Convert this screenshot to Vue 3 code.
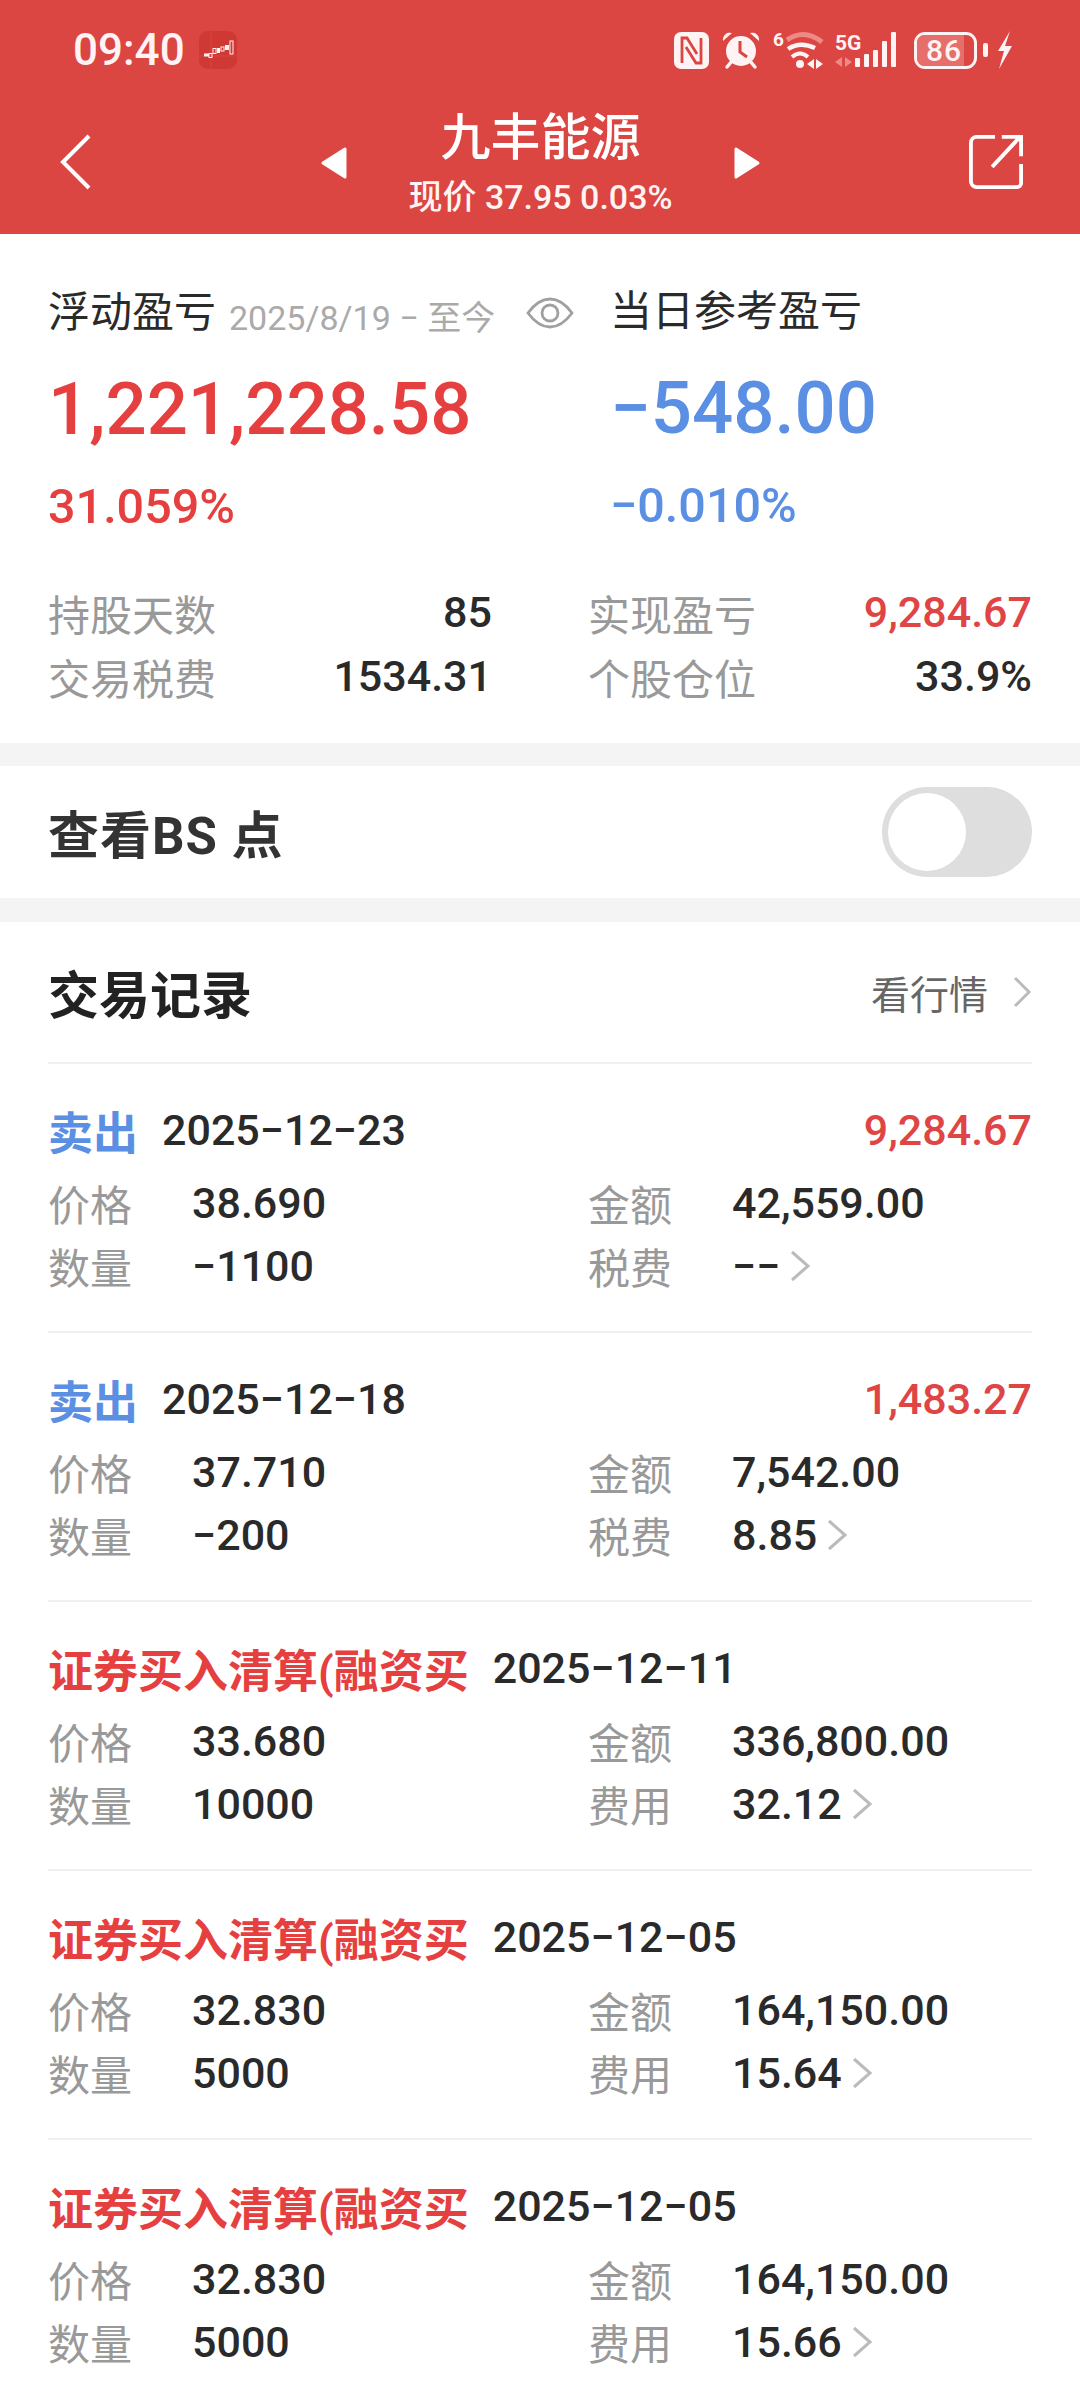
<script setup>
const stats = [
  [{ l: '持股天数', v: '85' }, { l: '实现盈亏', v: '9,284.67', red: true }],
  [{ l: '交易税费', v: '1534.31' }, { l: '个股仓位', v: '33.9%' }],
]
const records = [
  { type: '卖出', sell: true, date: '2025−12−23', profit: '9,284.67', price: '38.690', amount: '42,559.00', qty: '−1100', feeLabel: '税费', fee: '−−' },
  { type: '卖出', sell: true, date: '2025−12−18', profit: '1,483.27', price: '37.710', amount: '7,542.00', qty: '−200', feeLabel: '税费', fee: '8.85' },
  { type: '证券买入清算(融资买', date: '2025−12−11', price: '33.680', amount: '336,800.00', qty: '10000', feeLabel: '费用', fee: '32.12' },
  { type: '证券买入清算(融资买', date: '2025−12−05', price: '32.830', amount: '164,150.00', qty: '5000', feeLabel: '费用', fee: '15.64' },
  { type: '证券买入清算(融资买', date: '2025−12−05', price: '32.830', amount: '164,150.00', qty: '5000', feeLabel: '费用', fee: '15.66' },
]
</script>

<template>
  <div class="page">
    <header class="head">
      <div class="status">
        <div class="status-left">
          <span class="time">09:40</span>
          <svg width="38" height="38" viewBox="0 0 38 38">
            <rect width="38" height="38" rx="9" fill="#cf3833" />
            <path d="M12 0v38M0 25h38" stroke="#d9443f" stroke-width="1" />
            <g fill="#fff3f3">
              <rect x="5" y="22.5" width="5" height="3" />
              <rect x="18" y="17" width="3" height="5" />
              <rect x="26" y="14" width="4" height="5" />
            </g>
            <g fill="none" stroke="#fff3f3" stroke-width="1">
              <rect x="10" y="22.5" width="3" height="4" />
              <rect x="14" y="17.5" width="3" height="5" />
              <rect x="22" y="16" width="3" height="4" />
              <rect x="31" y="10" width="3" height="13" />
            </g>
          </svg>
        </div>
        <div class="status-right">
          <svg class="i-nfc" width="35" height="37" viewBox="0 0 35 37">
            <rect width="35" height="37" rx="7" fill="#fff3f3" />
            <path d="M8 31V6h5l10 16M27 6v25h-5L12 15" fill="none" stroke="#db4542" stroke-width="2.8" />
          </svg>
          <svg class="i-alarm" width="38" height="38" viewBox="0 0 38 38">
            <circle cx="19" cy="20" r="15" fill="#fff3f3" />
            <path d="M1 10a7 7 0 0 1 9-8zM37 10a7 7 0 0 0-9-8z" fill="#fff3f3" />
            <path d="M5 36l5-6M33 36l-5-6" stroke="#fff3f3" stroke-width="3.5" stroke-linecap="round" />
            <path d="M18 10v11l7 5" fill="none" stroke="#db4542" stroke-width="3" />
          </svg>
          <svg class="i-wifi" width="51" height="40" viewBox="0 0 51 40">
            <text x="0" y="16" class="tiny">6</text>
            <path d="M14 10Q31 -2 49 12" fill="none" stroke="#ec8a87" stroke-width="5" />
            <path d="M15 19Q27 11 42 18" fill="none" stroke="#fff3f3" stroke-width="4.5" />
            <path d="M19 27Q27 20 35 27" fill="none" stroke="#fff3f3" stroke-width="4" />
            <circle cx="27" cy="34" r="4" fill="#fff3f3" />
            <path d="M41 29v10l-7-5zM43 29v10l7-5z" fill="#fff3f3" />
          </svg>
          <svg class="i-signal" width="64" height="40" viewBox="0 0 64 40">
            <text x="1" y="20" class="tiny2">5G</text>
            <path d="M8 27v10l-7-5zM11 27v10l7-5z" fill="#ec8a87" />
            <rect x="21" y="28" width="5" height="9" rx="1" fill="#fff3f3" />
            <rect x="30" y="24" width="5" height="13" rx="1" fill="#fff3f3" />
            <rect x="39" y="20" width="5" height="17" rx="1" fill="#fff3f3" />
            <rect x="48" y="11" width="5" height="26" rx="1" fill="#fff3f3" />
            <rect x="57" y="2" width="5" height="35" rx="1" fill="#fff3f3" />
          </svg>
          <div class="batt">
            <div class="batt-body"><div class="batt-fill"></div><span>86</span></div>
            <i class="batt-tip"></i>
          </div>
          <svg class="i-bolt" width="15" height="38" viewBox="0 0 15 38"><path d="M13 0L1 20h6L2 38l13-23H8z" fill="#fff3f3" /></svg>
        </div>
      </div>
      <div class="nav">
        <svg class="back" width="34" height="56" viewBox="0 0 34 56"><path d="M30 2L4 28l26 26" fill="none" stroke="#fff" stroke-width="4" /></svg>
        <div class="nav-mid">
          <svg width="26" height="32" viewBox="0 0 26 32"><path d="M24 2v28L2 16z" fill="#fff" stroke="#fff" stroke-width="3" stroke-linejoin="round" /></svg>
          <div class="titles">
            <div class="title">九丰能源</div>
            <div class="sub">现价 37.95 0.03%</div>
          </div>
          <svg width="26" height="32" viewBox="0 0 26 32"><path d="M2 2v28l22-14z" fill="#fff" stroke="#fff" stroke-width="3" stroke-linejoin="round" /></svg>
        </div>
        <svg class="share" width="54" height="54" viewBox="0 0 56 56">
          <path d="M27 2H8a6 6 0 0 0-6 6v40a6 6 0 0 0 6 6h42a4 4 0 0 0 4-4V30" fill="none" stroke="#fff" stroke-width="4" />
          <path d="M24 33L52 3M34 2h20v20" fill="none" stroke="#fff" stroke-width="4" />
        </svg>
      </div>
    </header>

    <section class="summary">
      <div class="pl">
        <div class="pl-left">
          <div class="pl-label">
            <span class="lbl">浮动盈亏</span>
            <span class="range">2025/8/19 − 至今</span>
            <svg class="eye" width="48" height="32" viewBox="0 0 48 32">
              <path d="M2 16C10 5 18 2 24 2s14 3 22 14c-8 11-16 14-22 14S10 27 2 16z" fill="none" stroke="#a0a0a0" stroke-width="2.8" />
              <circle cx="24" cy="16" r="8" fill="none" stroke="#a0a0a0" stroke-width="2.8" />
            </svg>
          </div>
          <div class="big red">1,221,228.58</div>
          <div class="pct red">31.059%</div>
        </div>
        <div class="pl-right">
          <div class="lbl">当日参考盈亏</div>
          <div class="big blue">−548.00</div>
          <div class="pct blue">−0.010%</div>
        </div>
      </div>
      <div class="stats">
        <div v-for="(row, i) in stats" :key="i" class="stat-row">
          <div v-for="c in row" :key="c.l" class="stat">
            <span class="grey">{{ c.l }}</span>
            <span class="val" :class="{ red: c.red }">{{ c.v }}</span>
          </div>
        </div>
      </div>
    </section>

    <section class="toggle-row">
      <div class="toggle-title">查看BS 点</div>
      <div class="toggle"><div class="knob"></div></div>
    </section>

    <section class="records">
      <div class="rec-head">
        <div class="rec-title">交易记录</div>
        <div class="rec-link">
          <span>看行情</span>
          <svg width="20" height="32" viewBox="0 0 20 32"><path d="M3 2l14 14L3 30" fill="none" stroke="#bbb" stroke-width="3" /></svg>
        </div>
      </div>
      <div v-for="(r, i) in records" :key="i" class="rec">
        <div class="rec-top">
          <div class="rec-type">
            <b :class="r.sell ? 'blue' : 'red'">{{ r.type }}</b>
            <span class="val">{{ r.date }}</span>
          </div>
          <span v-if="r.profit" class="val red">{{ r.profit }}</span>
        </div>
        <div class="rec-grid">
          <div class="cell"><span class="grey">价格</span><span class="val">{{ r.price }}</span></div>
          <div class="cell"><span class="grey">金额</span><span class="val">{{ r.amount }}</span></div>
          <div class="cell"><span class="grey">数量</span><span class="val">{{ r.qty }}</span></div>
          <div class="cell">
            <span class="grey">{{ r.feeLabel }}</span><span class="val">{{ r.fee }}</span>
            <svg class="chev" width="22" height="32" viewBox="0 0 22 32"><path d="M3 2l16 14L3 30" fill="none" stroke="#bbb" stroke-width="3" /></svg>
          </div>
        </div>
      </div>
    </section>
  </div>
</template>

<style scoped>
.page {
  width: 1080px;
  height: 2400px;
  overflow: hidden;
  background: #f4f4f4;
  font-family: Roboto, "Noto Sans CJK SC", sans-serif;
  color: #222;
  font-size: 40px;
}
svg { overflow: visible; }
.head { height: 234px; background: #db4542; color: #fff; }
.status { height: 100px; display: flex; justify-content: space-between; align-items: center; padding: 0 68px 0 73px; }
.status-left { display: flex; align-items: center; gap: 14px; }
.time { font-size: 44px; font-weight: 500; color: #fff3f3; }
.status-right { display: flex; align-items: center; }
.i-nfc { margin-right: 13px; }
.i-alarm { margin-right: 13px; }
.i-wifi { margin-right: 10px; }
.i-signal { margin-right: 16px; }
.i-bolt { margin-left: 9px; }
.tiny { font: 700 19px Roboto, sans-serif; fill: #fff3f3; }
.tiny2 { font: 700 21px Roboto, sans-serif; fill: #fff3f3; }
.batt { display: flex; align-items: center; gap: 6px; }
.batt-body { position: relative; width: 63px; height: 37px; border: 3px solid #fff3f3; border-radius: 11px; box-sizing: border-box; display: flex; align-items: center; justify-content: center; font-size: 30px; font-weight: 500; color: #fff3f3; letter-spacing: 1px; }
.batt-body span { position: relative; margin-right: 3px; line-height: 31px; }
.batt-fill { position: absolute; inset: 0 10px 0 0; background: #e66f6c; border-radius: 8px 0 0 8px; }
.batt-tip { width: 5px; height: 14px; background: #fff3f3; border-radius: 2px; }
.nav { height: 133px; display: flex; align-items: center; justify-content: space-between; padding: 0 57px 0 59px; position: relative; }
.nav-mid { position: absolute; left: 321px; width: 439px; top: 0; height: 133px; display: flex; justify-content: space-between; align-items: center; }
.nav-mid > svg { margin-top: -8px; }
.back, .share { margin-top: -9px; }
.titles { text-align: center; height: 133px; box-sizing: border-box; padding-top: 7px; }
.title { font-size: 50px; line-height: 62px; font-weight: 500; }
.sub { font-size: 34px; line-height: 56px; font-weight: 500; color: #fff3f3; white-space: nowrap; }

.summary { background: #fff; height: 509px; padding: 49px 48px 0; box-sizing: border-box; }
.pl { display: flex; height: 297px; }
.pl-left { width: 562px; flex: none; }
.pl-right { margin-top: -1px; }
.pl-label { display: flex; align-items: center; height: 60px; white-space: nowrap; }
.lbl { font-size: 42px; line-height: 60px; color: #2a2a2a; }
.range { font-size: 34px; color: #aaa; margin: 4px 0 0 13px; }
.eye { margin-left: 31px; }
.big { font-size: 72.5px; font-weight: 500; line-height: 84px; margin-top: 25px; white-space: nowrap; }
.pct { font-size: 48.5px; font-weight: 500; line-height: 60px; margin-top: 25px; }
.red { color: #e5403f; }
.blue { color: #5b8fe3; }
.stat-row { display: flex; justify-content: space-between; height: 64px; align-items: center; }
.stat { width: 444px; display: flex; justify-content: space-between; align-items: center; }
.grey { color: #999; font-size: 42px; }
.val { font-size: 43px; font-weight: 500; color: #2a2a2a; }
.val.red { color: #e04545; }

.toggle-row { margin-top: 23px; height: 132px; background: #fff; display: flex; align-items: center; justify-content: space-between; padding: 0 48px; }
.toggle-title { font-size: 51px; font-weight: 700; color: #333; letter-spacing: 1px; }
.toggle { width: 150px; height: 90px; border-radius: 45px; background: #dedede; position: relative; }
.knob { position: absolute; left: 6px; top: 6px; width: 78px; height: 78px; border-radius: 50%; background: #fff; }

.records { margin-top: 24px; background: #fff; padding: 0 48px; height: 1480px; }
.rec-head { height: 140px; display: flex; align-items: center; justify-content: space-between; }
.rec-title { font-size: 51px; font-weight: 700; color: #222; }
.rec-link { display: flex; align-items: center; gap: 24px; color: #666; font-size: 39px; }
.rec { border-top: 2px solid #f0f0f0; height: 269px; box-sizing: border-box; padding-top: 34px; }
.rec-top { display: flex; justify-content: space-between; align-items: center; height: 64px; }
.rec-type { display: flex; align-items: center; gap: 24px; }
.rec-type b { font-size: 45px; font-weight: 700; }
.rec-grid { display: grid; grid-template-columns: 540px 1fr; grid-auto-rows: 63px; margin-top: 9px; }
.cell { display: flex; align-items: center; }
.cell .grey { width: 144px; flex: none; }
.chev { margin-left: 9px; }
</style>
